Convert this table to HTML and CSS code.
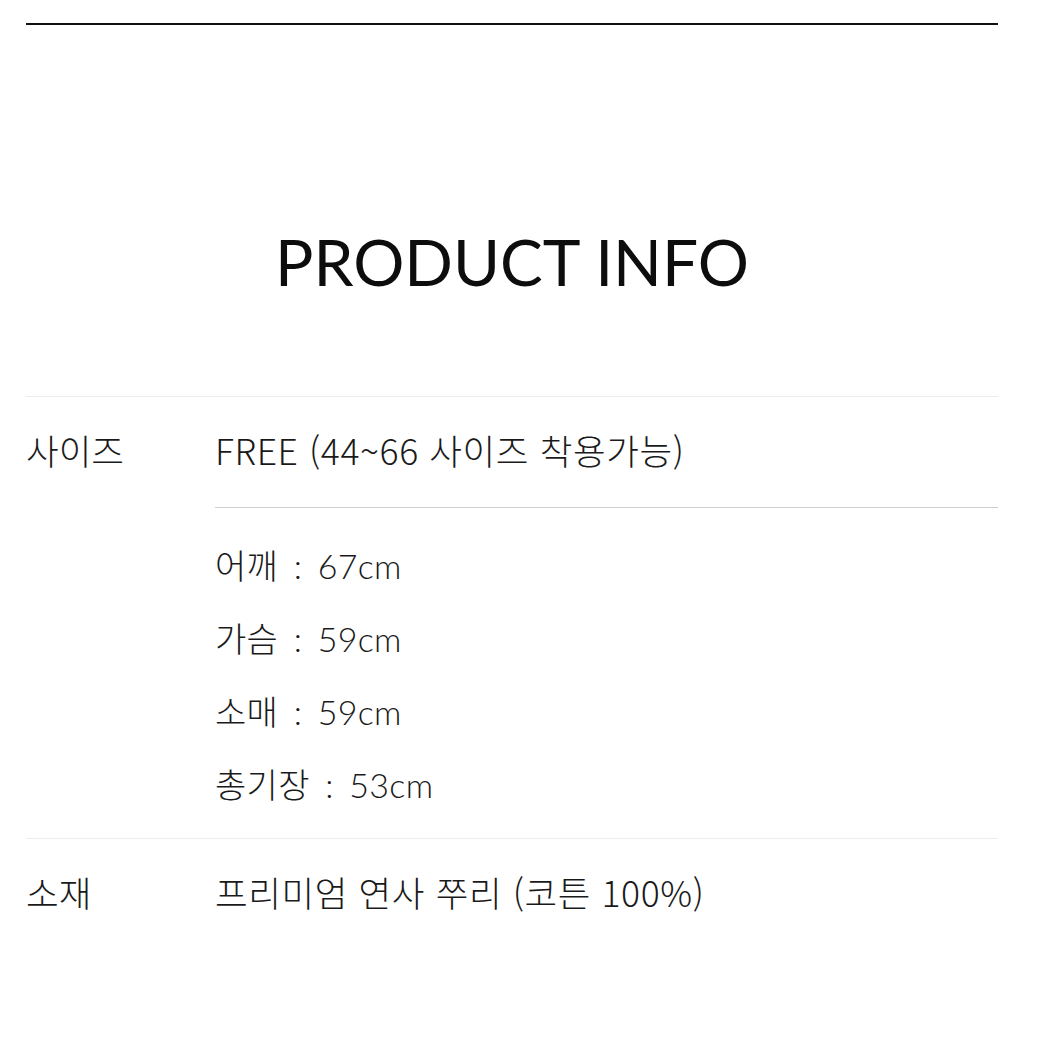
FILE: index.html
```html
<!DOCTYPE html>
<html lang="ko">
<head>
<meta charset="utf-8">
<link rel="stylesheet" href="styles.css">
</head>
<body>
<div class="page">
  <div class="top-rule"></div>
  <h1 class="title">PRODUCT INFO</h1>
  <div class="info">
    <div class="row">
      <div class="label">사이즈</div>
      <div class="value">
        <div class="main">FREE (44~66 사이즈 착용가능)</div>
        <div class="subs">
          <div class="sub">어깨 : 67cm</div>
          <div class="sub">가슴 : 59cm</div>
          <div class="sub">소매 : 59cm</div>
          <div class="sub">총기장 : 53cm</div>
        </div>
      </div>
    </div>
    <div class="row">
      <div class="label">소재</div>
      <div class="value">
        <div class="main">프리미엄 연사 쭈리 (코튼 100%)</div>
      </div>
    </div>
  </div>
</div>
</body>
</html>
```
FILE: styles.css
```css
html, body {
  margin: 0;
  padding: 0;
  background: #fff;
}
.page {
  padding: 23px 44px 0 26px;
  color: #1a1a1a;
  font-family: "Noto Sans CJK KR", sans-serif;
}
.top-rule {
  height: 2px;
  background: #111;
}
.title {
  margin: 0;
  padding-top: 197px;
  height: 174px;
  box-sizing: content-box;
  font-family: "Lato", "Noto Sans CJK KR", sans-serif;
  font-weight: 400;
  font-size: 64px;
  line-height: 80px;
  text-align: center;
  color: #0d0d0d;
}
.info {
  border-top: 1px solid #ececec;
}
.row {
  display: grid;
  grid-template-columns: 189px 1fr;
  border-bottom: 1px solid #ececec;
}
.row:last-child {
  border-bottom: none;
}
.label, .main {
  font-size: 35.5px;
  line-height: 40px;
  font-weight: 300;
}
.label {
  padding-top: 33px;
  letter-spacing: 0;
}
.main {
  padding: 33px 0 37px;
  letter-spacing: 0.6px;
}
.subs {
  border-top: 1px solid #cfcfcf;
  padding: 21px 0 17px;
}
.sub {
  font-family: "Lato", "Noto Sans CJK KR", sans-serif;
  font-size: 34px;
  line-height: 73px;
  font-weight: 300;
  word-spacing: 6px;
  letter-spacing: 0.3px;
}
```
